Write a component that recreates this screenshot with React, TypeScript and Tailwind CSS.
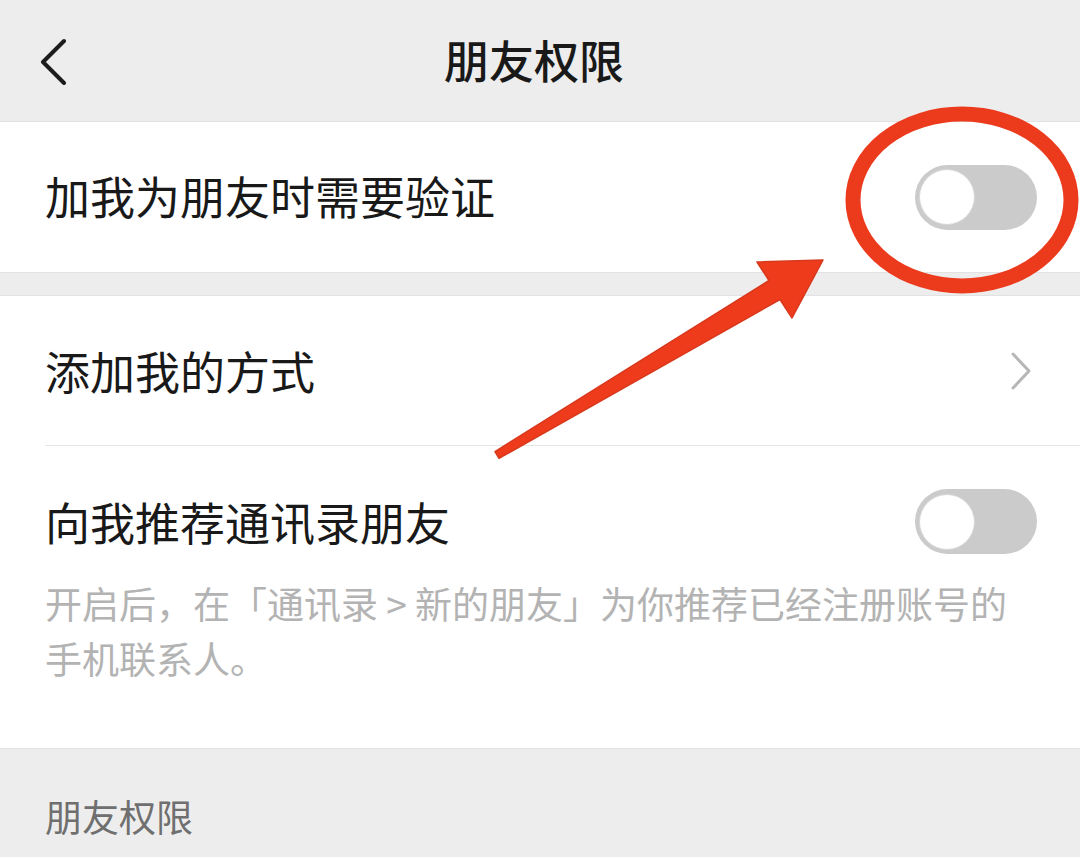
import React from 'react';

function Toggle() {
  return (
    <div className="flex h-[65px] w-[122px] items-center rounded-full bg-[#cbcbcb] pl-[4px]">
      <div className="h-[56px] w-[56px] rounded-full border border-[#d6d6d6] bg-white" />
    </div>
  );
}

function Annotation() {
  // red marker drawn on top of the screenshot
  return (
    <svg className="pointer-events-none absolute inset-0" width="1080" height="857" viewBox="0 0 1080 857">
      <ellipse cx="962" cy="200" rx="109" ry="86" fill="none" stroke="#ec3a1d" strokeWidth="15" />
      <polygon
        points="495,451.6 769,280.5 757,262 823,260 792,318 780,299.5 499,458.4"
        fill="#ee3b1c"
        stroke="#d8381c"
        strokeWidth="1.5"
        strokeLinejoin="round"
      />
    </svg>
  );
}

export default function App() {
  return (
    <div className="relative h-[857px] w-[1080px] overflow-hidden bg-[#ededed] font-['Noto_Sans_CJK_SC','Noto_Sans',sans-serif] text-[#191919]">
      <header className="grid h-[121px] grid-cols-[1fr_auto_1fr] items-center px-[40px]">
        <svg width="30" height="50" viewBox="0 0 30 50" className="mb-[2px]">
          <polyline points="24,6 3,27 24,48" fill="none" stroke="#1c1c1c" strokeWidth="4" strokeLinecap="round" strokeLinejoin="round" />
        </svg>
        <h1 className="mr-[12px] mb-[2px] text-[45px] font-medium leading-none">朋友权限</h1>
        <div />
      </header>

      <div className="flex h-[151px] items-center justify-between border-t border-[#e2e2e2] bg-white pl-[45px] pr-[43px]">
        <span className="mb-[3px] text-[45px] leading-none">加我为朋友时需要验证</span>
        <Toggle />
      </div>

      <div className="h-[24px] border-y border-[#e2e2e2] bg-[#ededed]" />

      <div className="bg-white pl-[45px]">
        <div className="flex h-[150px] items-center justify-between border-b border-[#e5e5e5] pr-[48px]">
          <span className="text-[45px] leading-none">添加我的方式</span>
          <svg width="22" height="40" viewBox="0 0 22 40">
            <polyline points="3,3 19,20 3,37" fill="none" stroke="#b6b6b6" strokeWidth="3" strokeLinecap="round" strokeLinejoin="round" />
          </svg>
        </div>
        <div className="pb-[62px] pr-[43px] pt-[43px]">
          <div className="flex h-[65px] items-center justify-between">
            <span className="text-[45px] leading-none">向我推荐通讯录朋友</span>
            <Toggle />
          </div>
          <p className="mt-[22px] pr-[20px] text-[37px] leading-[55px] text-[#b3b3b3]">
            开启后，在「通讯录 &gt; 新的朋友」为你推荐已经注册账号的手机联系人。
          </p>
        </div>
      </div>

      <div className="border-t border-[#e2e2e2] px-[45px] pt-[43px]">
        <span className="text-[37px] leading-[48px] text-[#6f6f6f]">朋友权限</span>
      </div>

      <Annotation />
    </div>
  );
}
